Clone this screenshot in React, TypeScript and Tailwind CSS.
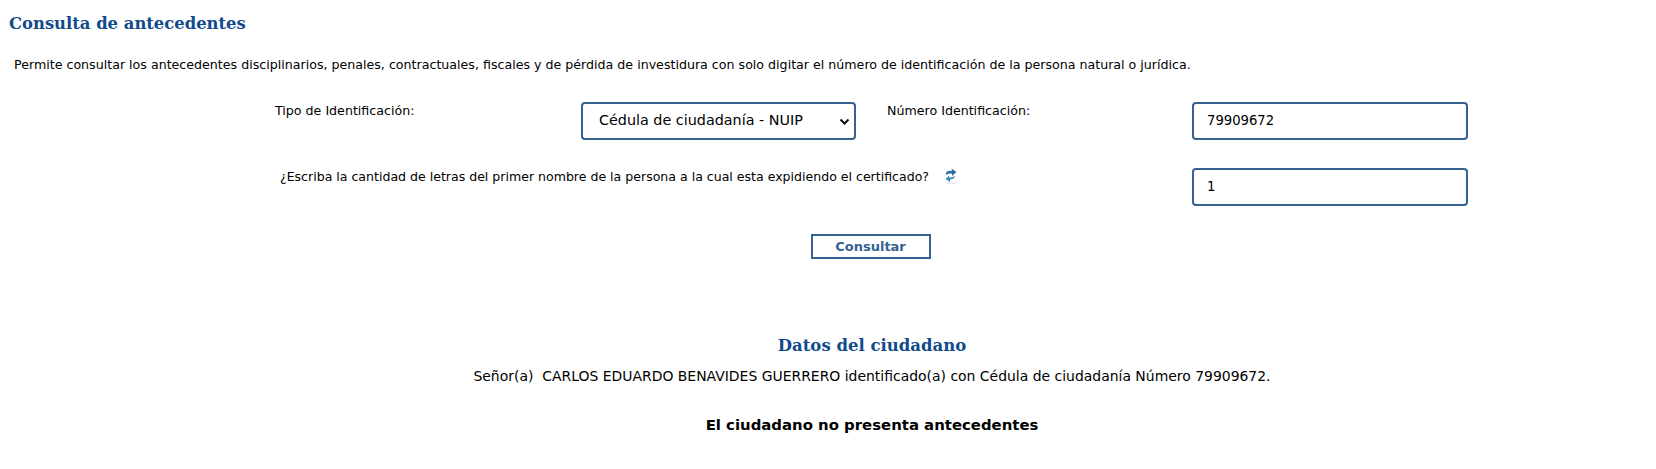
export default function App() {
  return (
    <div className="min-h-[469px] bg-white text-black font-['DejaVu_Sans','Liberation_Sans',sans-serif] text-[12.64px]">
      <h2 className="pl-[9px] pt-[12px] h-[36px] font-['DejaVu_Serif',serif] text-[16.4px] font-bold leading-[24px] text-[#114b8b]">
        Consulta de antecedentes
      </h2>

      <p className="pl-[14px] mt-[20px] h-[18px] leading-[18px]">
        Permite consultar los antecedentes disciplinarios, penales, contractuales, fiscales y de pérdida de investidura con solo digitar el número de identificación de la persona natural o jurídica.
      </p>

      <div className="flex mt-[28px] h-[38px]">
        <label className="ml-[275px] w-[306px] leading-[17px]">Tipo de Identificación:</label>
        <div className="relative w-[275px]">
          <select
            defaultValue="cc"
            className="w-full h-[38px] pl-[16px] pr-[8px] text-[14.35px] bg-white border-2 border-[#366292] rounded-[4px] appearance-none outline-none"
          >
            <option value="cc">Cédula de ciudadanía - NUIP</option>
          </select>
          <svg className="absolute right-[6px] top-[16px] pointer-events-none" width="11" height="7" viewBox="0 0 11 7" fill="none">
            <path d="M1.5 1.5L5.5 5.5L9.5 1.5" stroke="#111" strokeWidth="2" />
          </svg>
        </div>
        <label className="ml-[31px] w-[305px] leading-[17px]">Número Identificación:</label>
        <input
          readOnly
          value="79909672"
          className="w-[276px] h-[38px] pl-[13px] pr-[14px] pb-[1px] text-[13.2px] border-2 border-[#366292] rounded-[4px] outline-none"
        />
      </div>

      <div className="flex mt-[28px] h-[38px]">
        <label className="ml-[280px] w-[665px] text-[12.55px] leading-[18px]">
          ¿Escriba la cantidad de letras del primer nombre de la persona a la cual esta expidiendo el certificado?
        </label>
        <svg className="mr-[235px]" width="12" height="16" viewBox="0 0 12 16">
          <path d="M1 5 C2 3 4 2.5 7 3 L6.5 0.5 L11.5 4 L7 8 L7 5.8 C5 5.2 3 5.5 1 7 Z" fill="#2b6f9e" />
          <path d="M10 8 C9.5 10.5 7.5 11.5 5 11.5 L5 14 L0.5 11 L4 7.5 L4 9.2 C6 9.8 8 9.3 10 8 Z" fill="#3f8db5" />
          <path d="M1 14.5 H11 V16 H1 Z" fill="#e3ebee" />
        </svg>
        <input
          readOnly
          value="1"
          className="w-[276px] h-[38px] pl-[13px] pr-[14px] pb-[1px] text-[13.2px] border-2 border-[#366292] rounded-[4px] outline-none"
        />
      </div>

      <div className="flex justify-center mt-[28px] pl-[85px]">
        <button className="w-[120px] h-[25px] border-2 border-[#366292] bg-white text-[13px] font-bold leading-none text-[#366292]">
          Consultar
        </button>
      </div>

      <div className="mt-[75px] pl-[88px] text-center">
        <h3 className="font-['DejaVu_Serif',serif] text-[16.5px] font-bold leading-[24px] text-[#114b8b]">Datos del ciudadano</h3>
        <p className="mt-[8px] text-[13.95px] leading-[20px] whitespace-pre">Señor(a)  CARLOS EDUARDO BENAVIDES GUERRERO identificado(a) con Cédula de ciudadanía Número 79909672.</p>
        <p className="mt-[27px] text-[14.9px] font-bold leading-[24px]">El ciudadano no presenta antecedentes</p>
      </div>
    </div>
  );
}
